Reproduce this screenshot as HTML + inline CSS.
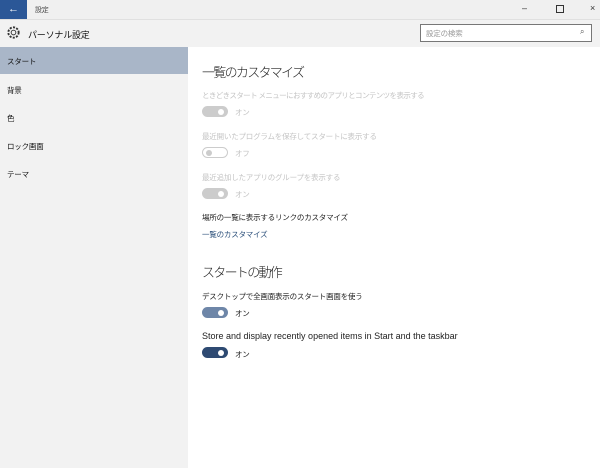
<!DOCTYPE html><html><head><meta charset="utf-8"><style>
body{margin:0;width:600px;height:468px;overflow:hidden;background:#f2f2f2;font-family:"Liberation Sans","Noto Sans CJK JP",sans-serif;position:relative}
div,span{position:absolute}
.t{font-size:7.5px;white-space:nowrap;letter-spacing:-0.2px}
.g{color:#c4c4c4}
.tg{width:26px;height:11px;border-radius:6px}
.tg i{position:absolute;width:6px;height:6px;border-radius:50%;top:2.5px}
.h{font-size:13px;letter-spacing:-1.7px;color:#222;font-family:"Liberation Sans","Noto Sans CJK JP Light","Noto Sans CJK JP",sans-serif;font-weight:300}
</style></head><body>
<div style="left:0;top:0;width:600px;height:19px;background:#f0f0f0;border-bottom:1px solid #e0e0e0"></div>
<div style="left:0;top:0;width:27px;height:19px;background:#2b5797;color:#fff;font-size:11px;text-align:center;line-height:18px">←</div>
<div class="t" style="left:35px;top:5px;font-size:7px;color:#444">設定</div>
<div class="t" style="left:522px;top:3px;color:#333;font-size:9px">–</div>
<div style="left:556px;top:5px;width:6px;height:6px;border:1px solid #333"></div>
<div class="t" style="left:590px;top:3px;color:#333;font-size:9px">×</div>
<svg style="position:absolute;left:6px;top:25px" width="15" height="15" viewBox="0 0 16 16"><circle cx="8" cy="8" r="2.5" fill="none" stroke="#333"/><circle cx="8" cy="8" r="5.5" fill="none" stroke="#333" stroke-dasharray="2.2 1.4" stroke-width="2"/></svg>
<div class="t" style="left:28px;top:28px;font-size:9px;color:#111">パーソナル設定</div>
<div style="left:420px;top:24px;width:170px;height:16px;border:1px solid #777;background:#fff"></div>
<div class="t" style="left:426px;top:28px;color:#999">設定の検索</div>
<div class="t" style="left:580px;top:27px;color:#555;font-size:8px">⌕</div>
<div style="left:0;top:47px;width:188px;height:27px;background:#a9b6c8"></div>
<div class="t" style="left:7px;top:56px;color:#111">スタート</div>
<div class="t" style="left:7px;top:85px;color:#111">背景</div>
<div class="t" style="left:7px;top:113px;color:#111">色</div>
<div class="t" style="left:7px;top:141px;color:#111">ロック画面</div>
<div class="t" style="left:7px;top:169px;color:#111">テーマ</div>
<div style="left:188px;top:47px;width:412px;height:421px;background:#fff"></div>
<div class="t h" style="left:202px;top:62px">一覧のカスタマイズ</div>
<div class="t g" style="left:202px;top:90px;letter-spacing:-0.6px">ときどきスタート メニューにおすすめのアプリとコンテンツを表示する</div>
<div class="tg" style="left:202px;top:106px;background:#ccc"><i style="right:4px;background:#fff"></i></div>
<div class="t g" style="left:235px;top:107px">オン</div>
<div class="t g" style="left:202px;top:131px">最近開いたプログラムを保存してスタートに表示する</div>
<div class="tg" style="left:202px;top:147px;border:1px solid #ccc;width:24px;height:9px"><i style="left:3px;top:1.5px;background:#ccc"></i></div>
<div class="t g" style="left:235px;top:148px">オフ</div>
<div class="t g" style="left:202px;top:172px">最近追加したアプリのグループを表示する</div>
<div class="tg" style="left:202px;top:188px;background:#ccc"><i style="right:4px;background:#fff"></i></div>
<div class="t g" style="left:235px;top:189px">オン</div>
<div class="t" style="left:202px;top:212px;color:#222">場所の一覧に表示するリンクのカスタマイズ</div>
<div class="t" style="left:202px;top:229px;color:#2b4f7a">一覧のカスタマイズ</div>
<div class="t h" style="left:202px;top:262px">スタートの動作</div>
<div class="t" style="left:202px;top:291px;color:#222">デスクトップで全画面表示のスタート画面を使う</div>
<div class="tg" style="left:202px;top:307px;background:#6e86a8"><i style="right:4px;background:#fff"></i></div>
<div class="t" style="left:235px;top:308px;color:#222">オン</div>
<div class="t" style="left:202px;top:331px;color:#222;font-size:9px;letter-spacing:0">Store and display recently opened items in Start and the taskbar</div>
<div class="tg" style="left:202px;top:347px;background:#2e4a72"><i style="right:4px;background:#fff"></i></div>
<div class="t" style="left:235px;top:349px;color:#222">オン</div>
</body></html>
